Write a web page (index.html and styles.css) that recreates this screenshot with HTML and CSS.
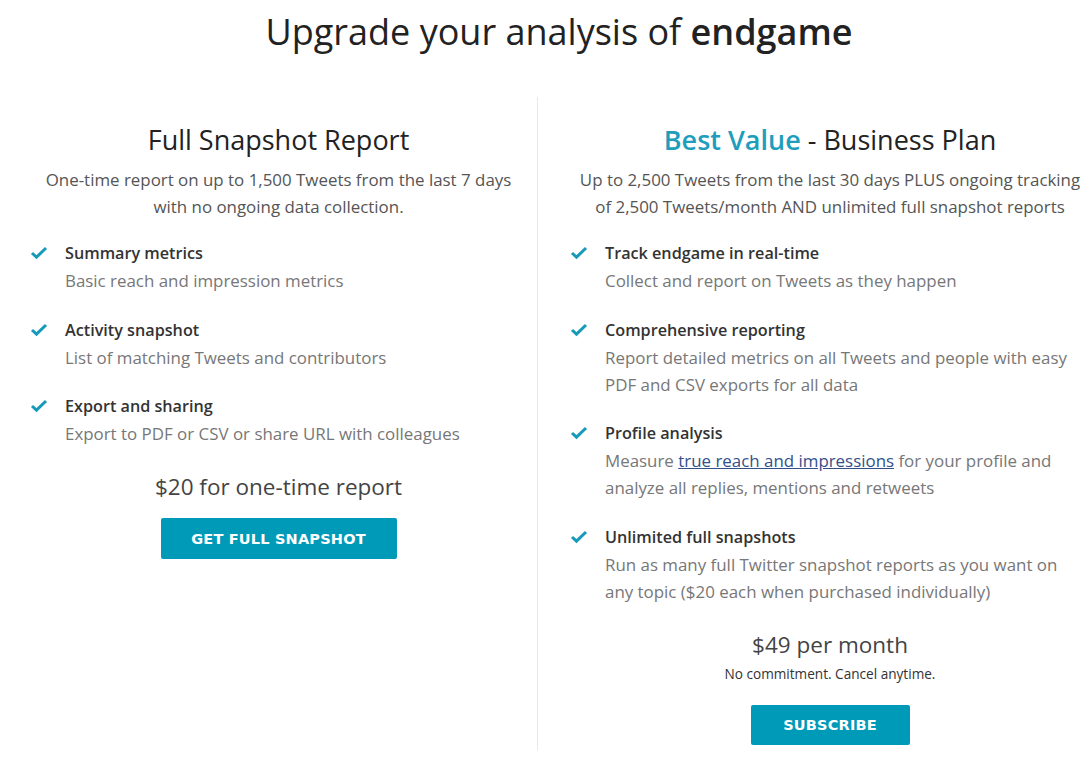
FILE: index.html
```html
<!DOCTYPE html>
<html lang="en">
<head>
    <meta charset="UTF-8">
    <meta name="viewport" content="width=device-width, initial-scale=1.0">
    <title>Upgrade</title>
<link rel="stylesheet" href="styles.css">
</head>
<body>
    <h1 class="page-title">Upgrade your analysis of <strong>endgame</strong></h1>

    <div class="plans">
        <div class="plan plan-snapshot">
            <h2 class="plan-name">Full Snapshot Report</h2>
            <p class="plan-desc">One-time report on up to 1,500 Tweets from the last 7 days with no ongoing data collection.</p>

            <ul class="features">
                <li>
                    <svg class="check" viewBox="0 0 18 14"><path d="M2 7 L6.5 11.2 L16 2" /></svg>
                    <h3>Summary metrics</h3>
                    <p>Basic reach and impression metrics</p>
                </li>
                <li>
                    <svg class="check" viewBox="0 0 18 14"><path d="M2 7 L6.5 11.2 L16 2" /></svg>
                    <h3>Activity snapshot</h3>
                    <p>List of matching Tweets and contributors</p>
                </li>
                <li>
                    <svg class="check" viewBox="0 0 18 14"><path d="M2 7 L6.5 11.2 L16 2" /></svg>
                    <h3>Export and sharing</h3>
                    <p>Export to PDF or CSV or share URL with colleagues</p>
                </li>
            </ul>

            <div class="price">$20 for one-time report</div>
            <button type="button" class="btn btn-snapshot">GET FULL SNAPSHOT</button>
        </div>

        <div class="plan plan-business">
            <h2 class="plan-name"><span class="highlight">Best Value</span> - Business Plan</h2>
            <p class="plan-desc">Up to 2,500 Tweets from the last 30 days PLUS ongoing tracking of 2,500 Tweets/month AND unlimited full snapshot reports</p>

            <ul class="features">
                <li>
                    <svg class="check" viewBox="0 0 18 14"><path d="M2 7 L6.5 11.2 L16 2" /></svg>
                    <h3>Track endgame in real-time</h3>
                    <p>Collect and report on Tweets as they happen</p>
                </li>
                <li>
                    <svg class="check" viewBox="0 0 18 14"><path d="M2 7 L6.5 11.2 L16 2" /></svg>
                    <h3>Comprehensive reporting</h3>
                    <p>Report detailed metrics on all Tweets and people with easy PDF and CSV exports for all data</p>
                </li>
                <li>
                    <svg class="check" viewBox="0 0 18 14"><path d="M2 7 L6.5 11.2 L16 2" /></svg>
                    <h3>Profile analysis</h3>
                    <p>Measure <a href="#">true reach and impressions</a> for your profile and analyze all replies, mentions and retweets</p>
                </li>
                <li>
                    <svg class="check" viewBox="0 0 18 14"><path d="M2 7 L6.5 11.2 L16 2" /></svg>
                    <h3>Unlimited full snapshots</h3>
                    <p>Run as many full Twitter snapshot reports as you want on any topic ($20 each when purchased individually)</p>
                </li>
            </ul>

            <div class="price">$49 per month</div>
            <div class="price-note">No commitment. Cancel anytime.</div>
            <button type="button" class="btn btn-subscribe">SUBSCRIBE</button>
        </div>
    </div>
</body>
</html>
```

FILE: styles.css
```css
* {
    margin: 0;
    padding: 0;
    box-sizing: border-box;
}

body {
    font-family: "Open Sans", sans-serif;
    background: #ffffff;
    color: #333333;
    width: 1090px;
    overflow: hidden;
}

.page-title {
    font-size: 36px;
    font-weight: 400;
    color: #222222;
    text-align: center;
    line-height: 50px;
    padding-top: 7px;
    padding-left: 28px;
}

.page-title strong {
    font-weight: 600;
}

.plans {
    display: grid;
    grid-template-columns: 538px 552px;
    margin-top: 40px;
}

.plan {
    display: flex;
    flex-direction: column;
    align-items: center;
    padding-bottom: 5px;
}

.plan-snapshot {
    padding-left: 30px;
    padding-right: 10px;
    border-right: 1px solid #e8e8e8;
}

.plan-business {
    padding-left: 32px;
}

.plan-name {
    font-size: 27px;
    font-weight: 400;
    color: #222222;
    line-height: 36px;
    margin-top: 25px;
    text-align: center;
}

.highlight {
    color: #1e9dbd;
    font-weight: 600;
}

.plan-desc {
    font-size: 16.9px;
    line-height: 27px;
    color: #555555;
    text-align: center;
    margin-top: 8px;
}

.plan-snapshot .plan-desc {
    width: 480px;
}

.plan-business .plan-desc {
    width: 510px;
}

.features {
    list-style: none;
    align-self: stretch;
    margin-top: 20px;
}

.plan-business .features {
    padding-right: 8px;
}

.features li {
    position: relative;
    padding-left: 35px;
    margin-bottom: 22.5px;
}

.check {
    position: absolute;
    left: 0;
    top: 6px;
    width: 18px;
    height: 14px;
    fill: none;
    stroke: #1799b9;
    stroke-width: 3;
}

.features h3 {
    font-size: 16.2px;
    font-weight: 600;
    color: #333333;
    line-height: 27px;
}

.features p {
    font-size: 16.9px;
    line-height: 27px;
    color: #777777;
}

.features a {
    color: #34508a;
}

.price {
    font-size: 22.5px;
    line-height: 32px;
    color: #444444;
    margin-top: 2px;
}

.plan-snapshot .price {
    margin-top: 1px;
}

.price-note {
    font-size: 13.6px;
    line-height: 22px;
    color: #333333;
    margin-top: 2px;
}

.btn {
    background: #009ab9;
    color: #ffffff;
    border: none;
    border-radius: 2px;
    font-family: "DejaVu Sans", sans-serif;
    font-weight: 700;
    font-size: 14.5px;
    letter-spacing: 0.2px;
    height: 41px;
    cursor: pointer;
}

.btn-snapshot {
    width: 236px;
    margin-top: 15.5px;
}

.btn-subscribe {
    width: 159px;
    height: 40px;
    margin-top: 20px;
}
```
